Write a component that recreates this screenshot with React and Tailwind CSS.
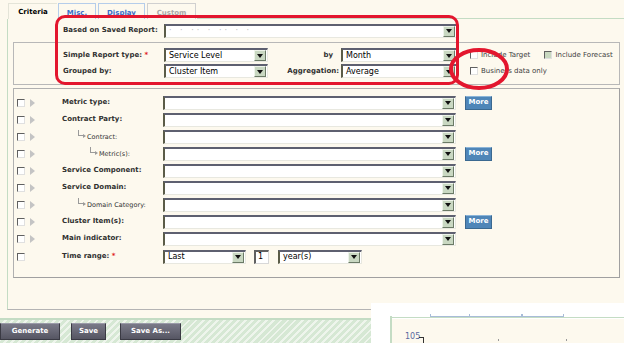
import React from "react";

const F = { fontFamily: '"DejaVu Sans", Verdana, sans-serif' };

function Arrow() {
  return (
    <span className="w-[12px] h-[11px] bg-[#c9d8c2] border-r border-b border-[#6b7a66] border-t border-l border-t-[#eef4ea] border-l-[#eef4ea] flex items-center justify-center shrink-0">
      <svg width="6" height="4" viewBox="0 0 6 4"><path d="M0 0h6L3 4z" fill="#111" /></svg>
    </span>
  );
}

function Select({ w, text, className = "" }) {
  return (
    <div
      className={`h-[14px] bg-white border-t-2 border-l-2 border-t-[#5e6070] border-l-[#5b5c48] border-b border-r border-b-[#e8e8e0] border-r-[#e8e8e0] flex items-center justify-between pl-[3px] pr-[1px] shrink-0 ${className}`}
      style={{ width: w }}
    >
      <span className="text-[8px] text-black leading-none whitespace-nowrap">{text}</span>
      <Arrow />
    </div>
  );
}

function Check({ grey }) {
  return (
    <span
      className={`w-[8px] h-[8px] border-t border-l border-[#606060] border-r border-b border-r-[#e0e0e0] border-b-[#e0e0e0] shrink-0 ${grey ? "bg-[#c8d8c0]" : "bg-white"}`}
    />
  );
}

function More() {
  return (
    <div className="w-[27px] h-[14px] bg-[#4f86b8] border border-[#3b6990] border-t-[#8cb5d8] flex items-center justify-center text-white text-[7px] font-bold leading-none">
      More
    </div>
  );
}

function Row({ label, sub, indent, select, more, star, noArrow }) {
  return (
    <div className="h-[17px] flex items-center">
      <div className="w-[3px]" />
      <Check />
      <div className="w-[5px]" />
      {noArrow ? (
        <div className="w-[5px]" />
      ) : (
        <svg width="5" height="8" viewBox="0 0 5 8"><path d="M0 0l5 4-5 4z" fill="#c4c4c4" /></svg>
      )}
      <div className="w-[27px]" />
      <div className="w-[101px] flex items-center whitespace-nowrap">
        {sub ? (
          <span className="flex items-start text-[#333]" style={{ paddingLeft: indent }}>
            <span className="w-[5px] h-[6px] -mt-[2px] border-l border-b border-[#9a9a9a]" />
            <svg width="3" height="4" viewBox="0 0 3 4" className="mt-[2px] mr-[1px]"><path d="M0 0l3 2-3 2z" fill="#9a9a9a" /></svg>
            <span className="text-[6.5px] leading-none mt-[2px]">{label}</span>
          </span>
        ) : (
          <span className="text-[7px] font-bold text-[#303030] leading-none">
            {label}
            {star && <span className="text-[#e02020]"> *</span>}
          </span>
        )}
      </div>
      {select || <Select w={293} text="" />}
      {more && (
        <div className="ml-[9px]">
          <More />
        </div>
      )}
    </div>
  );
}

export default function App() {
  return (
    <div className="w-[624px] h-[343px] bg-[#fdf9ee] relative overflow-hidden" style={F}>
      {/* tabs */}
      <div className="h-[19px] flex items-end pl-[8px] gap-[1px]">
        <div className="w-[49px] h-[16px] border-l border-t border-[#e4e4d8] flex items-center justify-center pt-[1px] text-[7px] font-bold text-black">
          Criteria
        </div>
        <div className="w-[38px] h-[16px] border border-b-0 border-[#b5cdea] flex items-end justify-center pb-[1px] text-[7px] font-bold text-[#3a6cc8] underline">
          Misc.
        </div>
        <div className="w-[47px] h-[16px] ml-[1px] border border-b-0 border-[#b5cdea] flex items-end justify-center pb-[1px] text-[7px] font-bold text-[#3a6cc8] underline">
          Display
        </div>
        <div className="w-[49px] h-[16px] ml-[1px] border border-b-0 border-[#d0d0d0] flex items-end justify-center pb-[1px] text-[7px] font-bold text-[#a8a8a8]">
          Custom
        </div>
        <div className="flex-1 border-b border-[#c4dcc4]" />
      </div>

      {/* content frame */}
      <div className="ml-[7px] h-[291px] border-l border-b border-l-[#c4dcc4] border-b-[#b4b4b4] pl-[5px] pr-[4px] flex flex-col">
        <div className="h-[23px] flex items-center">
          <div className="w-[50px]" />
          <div className="w-[101px] text-[7px] font-bold text-[#303030] leading-none whitespace-nowrap">Based on Saved Report:</div>
          <Select w={293} text={<span className="text-[#bbb] tracking-[3px]">· · ·· ·  ·· ·  ·</span>} />
        </div>

        <div className="h-[43px] border border-[#b8b8b8] flex flex-col pt-[5px] gap-[2px]">
          <div className="h-[14px] flex items-center">
            <div className="w-[49px]" />
            <div className="w-[101px] text-[7px] font-bold text-[#303030] leading-none whitespace-nowrap">
              Simple Report type: <span className="text-[#e02020]">*</span>
            </div>
            <Select w={104} text="Service Level" />
            <div className="w-[73px] text-right pr-[8px] text-[7px] font-bold text-[#303030]">by</div>
            <Select w={116} text="Month" />
            <div className="w-[13px]" />
            <Check />
            <span className="ml-[3px] text-[7px] text-[#404040] whitespace-nowrap">Include Target</span>
            <div className="w-[14px]" />
            <Check grey />
            <span className="ml-[3px] text-[7px] text-[#404040] whitespace-nowrap">Include Forecast</span>
          </div>
          <div className="h-[14px] flex items-center">
            <div className="w-[49px]" />
            <div className="w-[101px] text-[7px] font-bold text-[#303030] leading-none">Grouped by:</div>
            <Select w={104} text="Cluster Item" />
            <div className="w-[73px] text-right pr-[2px] text-[7px] font-bold text-[#303030] whitespace-nowrap">Aggregation:</div>
            <Select w={116} text="Average" />
            <div className="w-[13px]" />
            <Check />
            <span className="ml-[3px] text-[7px] text-[#404040] whitespace-nowrap">Business data only</span>
          </div>
        </div>

        <div className="mt-[3px] h-[190px] border border-[#b0b0b0] border-r-[#a0a0a0] border-b-[#a0a0a0] flex flex-col pt-[5px]">
          <Row label="Metric type:" more />
          <Row label="Contract Party:" />
          <Row label="Contract:" sub indent={16} />
          <Row label="Metric(s):" sub indent={28} more />
          <Row label="Service Component:" />
          <Row label="Service Domain:" />
          <Row label="Domain Category:" sub indent={16} />
          <Row label="Cluster Item(s):" more />
          <Row label="Main indicator:" />
          <div className="mt-[1px]">
            <Row
              label="Time range:"
              star
              noArrow
              select={
                <div className="flex items-center">
                  <Select w={83} text="Last" />
                  <div className="w-[15px] h-[14px] ml-[8px] bg-white border-t-2 border-l-2 border-t-[#606060] border-l-[#606060] border-r border-b border-[#d8d8d8] text-[8px] leading-none pl-[2px] flex items-center">1</div>
                  <Select w={84} text="year(s)" className="ml-[9px]" />
                </div>
              }
            />
          </div>
        </div>
      </div>

      {/* bottom bar */}
      <div className="mt-[8px] h-[2px] bg-[#c4dcc4]" />
      <div className="h-[23px] bg-[repeating-linear-gradient(135deg,#d6e8d4_0px,#d6e8d4_3px,#eef5ec_3px,#eef5ec_5px)] flex items-center gap-[11px]">
        {["Generate", "Save", "Save As..."].map((t, i) => (
          <div
            key={t}
            className={`h-[17px] bg-[linear-gradient(#7a7a88,#555562)] border border-[#3a3a44] border-t-[#9a9aa8] flex items-center justify-center text-white text-[7px] font-bold ${i === 0 ? "w-[60px]" : i === 1 ? "w-[35px] ml-[0px]" : "w-[61px] ml-[3px]"}`}
          >
            {t}
          </div>
        ))}
      </div>

      {/* overlapping white chart window */}
      <div className="absolute left-[371px] top-[303px] w-[253px] h-[40px] bg-white">
        <div className="absolute left-[19px] top-[13px] w-[2px] h-[27px] bg-[#c4dcc4]" />
        <div className="absolute left-[19px] top-[14px] right-0 h-[1px] bg-[#c4dcc4]" />
        <div className="absolute left-[59px] top-[13px] w-[134px] h-[1px] bg-[#a8bcd8]" />
        <div className="absolute left-[59px] top-[11px] w-[1px] h-[3px] bg-[#a8bcd8]" />
        <div className="absolute left-[98px] top-[11px] w-[1px] h-[3px] bg-[#a8bcd8]" />
        <div className="absolute left-[150px] top-[11px] w-[2px] h-[3px] bg-[#a8bcd8]" />
        <div className="absolute left-[192px] top-[11px] w-[1px] h-[3px] bg-[#a8bcd8]" />
        <div className="absolute left-[21px] top-[16px] right-0 h-[24px] bg-[#fdf9ee]" />
        <div className="absolute left-[34px] top-[30px] text-[8px] leading-none text-[#5a6aa0]">105</div>
        <div className="absolute left-[48px] top-[34px] w-[5px] h-[1px] bg-[#333]" />
        <div className="absolute left-[52px] top-[34px] w-[1px] h-[6px] bg-[#333]" />
        <div className="absolute left-[127px] top-[36px] w-[1px] h-[2px] bg-[#999]" />
        <div className="absolute left-[195px] top-[36px] w-[1px] h-[2px] bg-[#999]" />
      </div>

      {/* red annotations */}
      <div className="absolute left-[55px] top-[15px] w-[404px] h-[70px] border-[3px] border-[#e3162e] rounded-[10px] pointer-events-none" />
      <svg className="absolute left-0 top-0 pointer-events-none" width="624" height="343">
        <ellipse cx="479" cy="69" rx="28" ry="19" fill="none" stroke="#e3162e" strokeWidth="4" />
      </svg>
    </div>
  );
}
